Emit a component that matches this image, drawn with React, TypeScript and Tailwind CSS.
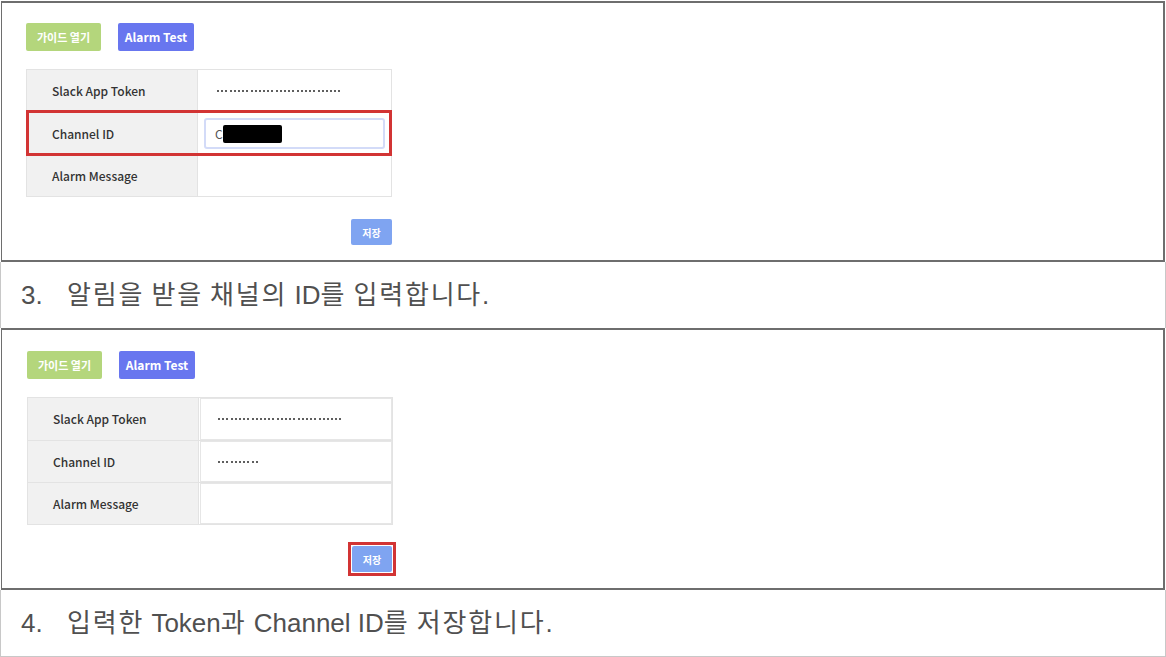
import { ReactNode } from "react";

const uiFont = { fontFamily: '"Noto Sans CJK KR", "Noto Sans", sans-serif' };
const docFont = { fontFamily: '"Liberation Sans", "Noto Sans CJK KR", sans-serif' };

function Dots({ count }: { count: number }) {
  return (
    <div className="flex items-center gap-[2.2px]">
      {Array.from({ length: count }).map((_, i) => (
        <span key={i} className="h-[2px] w-[2px] rounded-full bg-[#2a2a2a]" />
      ))}
    </div>
  );
}

function TopButtons() {
  return (
    <div className="flex gap-[17px]">
      <button className="flex h-[28px] w-[75px] items-center justify-center rounded-[2px] bg-[#b4d67c] text-[11px] font-bold text-white">
        가이드 열기
      </button>
      <button className="flex h-[28px] w-[76px] items-center justify-center rounded-[2px] bg-[#6876ef] text-[12px] font-bold text-white">
        Alarm Test
      </button>
    </div>
  );
}

type Row = { label: string; value: ReactNode };

function FormTable({ rows, boxed }: { rows: Row[]; boxed?: boolean }) {
  return (
    <div className="w-[366px] border border-[#e3e3e3]">
      {rows.map((row, i) => (
        <div
          key={row.label}
          className={[
            "flex h-[42px]",
            i > 0 ? "border-t border-[#e3e3e3]" : "",
          ].join(" ")}
        >
          <div className="flex w-[171px] shrink-0 items-center border-r border-[#e3e3e3] bg-[#f1f1f1] pl-[25px] text-[12px] font-medium text-[#333]">
            {row.label}
          </div>
          <div
            className={[
              "flex flex-1 items-center bg-white",
              boxed ? "ml-[1px] border border-[#e6e6e6]" : "",
            ].join(" ")}
          >
            {row.value}
          </div>
        </div>
      ))}
    </div>
  );
}

// hangul runs get a little extra spacing, latin stays as is
function DocText({ text }: { text: string }) {
  const parts = text.split(/([가-힣]+)/).filter(Boolean);
  return (
    <span>
      {parts.map((p, i) =>
        /[가-힣]/.test(p) ? (
          <span key={i} className="tracking-[1.8px]">
            {p}
          </span>
        ) : (
          <span key={i}>{p}</span>
        )
      )}
    </span>
  );
}

function Caption({ num, text, h }: { num: string; text: string; h: string }) {
  return (
    <div
      className={`flex items-center border-x border-[#c8c8c8] pl-[20px] text-[26px] text-[#505050] ${h}`}
      style={docFont}
    >
      <span className="w-[46px]">{num}</span>
      <DocText text={text} />
    </div>
  );
}

export default function App() {
  return (
    <div className="w-[1166px] bg-white" style={uiFont}>
      {/* step 3 screenshot */}
      <div className="ml-[1px] mr-[1px] mt-[1px] h-[261px] border-2 border-[#6e6e6e] border-l-[1px] pl-[24px] pt-[20px]">
        <TopButtons />
        <div className="relative mt-[18px]">
          <FormTable
            rows={[
              { label: "Slack App Token", value: <div className="pl-[19px]"><Dots count={30} /></div> },
              {
                label: "Channel ID",
                value: (
                  <div className="ml-[6px] mr-[6px] flex h-[31px] flex-1 items-center rounded-[3px] border-2 border-[#d3dbf8] pl-[9px] text-[12px] text-[#555]">
                    <span>C</span>
                    <span className="h-[18px] w-[59px] rounded-[2px] bg-black" />
                  </div>
                ),
              },
              { label: "Alarm Message", value: null },
            ]}
          />
          <div className="pointer-events-none absolute left-0 top-[41px] h-[46px] w-[366px] border-[3px] border-[#d23434]" />
        </div>
        <div className="flex w-[366px] justify-end pt-[22px]">
          <button className="flex h-[26px] w-[41px] items-center justify-center rounded-[2px] bg-[#7fa4f1] text-[10px] font-bold text-white">
            저장
          </button>
        </div>
      </div>

      <Caption num="3." text="알림을 받을 채널의 ID를 입력합니다." h="h-[66px]" />

      {/* step 4 screenshot */}
      <div className="ml-[1px] mr-[1px] h-[262px] border-2 border-[#6e6e6e] border-l-[1px] pl-[25px] pt-[21px]">
        <TopButtons />
        <div className="mt-[18px]">
          <FormTable
            boxed
            rows={[
              { label: "Slack App Token", value: <div className="pl-[17px]"><Dots count={30} /></div> },
              { label: "Channel ID", value: <div className="pl-[17px]"><Dots count={10} /></div> },
              { label: "Alarm Message", value: null },
            ]}
          />
        </div>
        <div className="flex w-[369px] justify-end pt-[17px]">
          <div className="border-[3px] border-[#d23434] p-[1px]">
            <button className="flex h-[26px] w-[40px] items-center justify-center rounded-[2px] bg-[#7fa4f1] text-[10px] font-bold text-white">
              저장
            </button>
          </div>
        </div>
      </div>

      <Caption num="4." text="입력한 Token과 Channel ID를 저장합니다." h="h-[67px] border-b" />
    </div>
  );
}
